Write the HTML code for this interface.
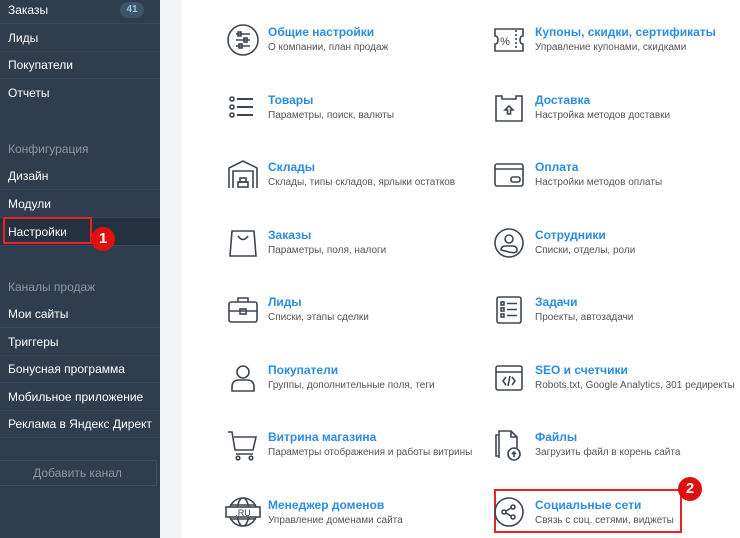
<!DOCTYPE html><html><head><meta charset="utf-8"><style>
*{margin:0;padding:0;box-sizing:border-box}
body{width:740px;height:538px;overflow:hidden;background:#fff;font-family:"Liberation Sans",sans-serif;position:relative}
#sb{position:absolute;left:0;top:0;width:160px;height:538px;background:#2f3e4e}
#strip{position:absolute;left:160px;top:0;width:22px;height:538px;background:#f3f4f5}
.it{position:absolute;left:0;width:160px;height:27px;color:#fff;font-size:12px;padding-left:8px;line-height:28px;border-bottom:1px solid #38475700;box-shadow:0 1px 0 #384757}
.hd{position:absolute;left:8px;color:#8d96a0;font-size:12px}
.badge{position:absolute;right:16px;top:3px;width:24px;height:16px;border-radius:8px;background:#3e5468;color:#9fc3e0;font-size:10px;font-weight:bold;text-align:center;line-height:16px}
.t{position:absolute;font-size:12px;font-weight:bold;color:#2b8de0}
.s{position:absolute;font-size:10px;color:#555}
svg.ic{position:absolute;width:34px;height:34px;fill:none;stroke:#3d4650;stroke-width:1.6}
.red{position:absolute;border:2px solid #e62525}
.num{position:absolute;width:24px;height:24px;border-radius:50%;background:#e01010;color:#fff;font-weight:bold;font-size:15px;text-align:center;line-height:24px}
</style></head><body>
<div id="sb">
<div class="it" style="top:-4px">Заказы<div class="badge" style="top:6px">41</div></div>
<div class="it" style="top:24px">Лиды</div>
<div class="it" style="top:51px">Покупатели</div>
<div class="it" style="top:79px;box-shadow:none">Отчеты</div>
<div class="hd" style="top:142px">Конфигурация</div>
<div class="it" style="top:162px">Дизайн</div>
<div class="it" style="top:190px">Модули</div>
<div class="it" style="top:218px;background:#243140">Настройки</div>
<div class="hd" style="top:280px">Каналы продаж</div>
<div class="it" style="top:300px">Мои сайты</div>
<div class="it" style="top:328px">Триггеры</div>
<div class="it" style="top:355px">Бонусная программа</div>
<div class="it" style="top:383px">Мобильное приложение</div>
<div class="it" style="top:410px">Реклама в Яндекс Директ</div>
<div style="position:absolute;left:-2px;top:460px;width:159px;height:26px;border:1px solid #3d4c5c;color:#8d96a0;font-size:12px;text-align:center;line-height:24px">Добавить канал</div>
</div>
<div id="strip"></div>
<div class="red" style="left:3px;top:217px;width:89px;height:27px"></div>
<div class="num" style="left:91px;top:227px">1</div>
<div class="red" style="left:494px;top:489px;width:188px;height:44px"></div>
<div class="num" style="left:678px;top:477px">2</div>

<!-- left column -->
<svg class="ic" style="left:226px;top:23px" viewBox="0 0 34 34"><circle cx="17" cy="17" r="15"/><path d="M10 11h14M10 17h14M10 23h14"/><rect x="12" y="9" width="3" height="4"/><rect x="18" y="15" width="3" height="4"/><rect x="13" y="21" width="3" height="4"/></svg>
<div class="t" style="left:268px;top:25px">Общие настройки</div><div class="s" style="left:268px;top:42px">О компании, план продаж</div>

<svg class="ic" style="left:226px;top:91px" viewBox="0 0 34 34"><circle cx="6" cy="8" r="2"/><circle cx="6" cy="16" r="2"/><circle cx="6" cy="24" r="2"/><path d="M11 8h16M11 16h16M11 24h16" stroke-width="1.9"/></svg>
<div class="t" style="left:268px;top:93px">Товары</div><div class="s" style="left:268px;top:110px">Параметры, поиск, валюты</div>

<svg class="ic" style="left:226px;top:158px" viewBox="0 0 34 34"><path d="M3 30V10L17 3l14 7v20M7 30V13h20v17"/><rect x="12" y="24" width="10" height="5"/><rect x="14" y="20" width="6" height="4"/></svg>
<div class="t" style="left:268px;top:160px">Склады</div><div class="s" style="left:268px;top:177px">Склады, типы складов, ярлыки остатков</div>

<svg class="ic" style="left:226px;top:226px" viewBox="0 0 34 34"><path d="M6 5h22l2 25H4z"/><path d="M12 10q5 7 10 0"/></svg>
<div class="t" style="left:268px;top:228px">Заказы</div><div class="s" style="left:268px;top:245px">Параметры, поля, налоги</div>

<svg class="ic" style="left:226px;top:293px" viewBox="0 0 34 34"><rect x="3" y="9" width="28" height="20" rx="2"/><path d="M12 9V5h10v4M3 18h28"/><rect x="14" y="16" width="6" height="5"/></svg>
<div class="t" style="left:268px;top:295px">Лиды</div><div class="s" style="left:268px;top:312px">Списки, этапы сделки</div>

<svg class="ic" style="left:226px;top:361px" viewBox="0 0 34 34"><circle cx="17" cy="11" r="6"/><path d="M6 30v-4q0-7 7-7h8q7 0 7 7v4z"/></svg>
<div class="t" style="left:268px;top:363px">Покупатели</div><div class="s" style="left:268px;top:380px">Группы, дополнительные поля, теги</div>

<svg class="ic" style="left:226px;top:428px" viewBox="0 0 34 34"><path d="M2 4h4l3 18h18l3-13H8M10 26h17"/><circle cx="12" cy="30" r="1.8"/><circle cx="25" cy="30" r="1.8"/></svg>
<div class="t" style="left:268px;top:430px">Витрина магазина</div><div class="s" style="left:268px;top:447px">Параметры отображения и работы витрины</div>

<svg class="ic" style="left:223px;top:495px;width:40px" viewBox="0 0 40 34"><circle cx="20" cy="17" r="14"/><ellipse cx="20" cy="17" rx="6" ry="14"/><path d="M7 10h26M7 24h26"/><rect x="3" y="12" width="34" height="10" fill="#fff"/><text x="20" y="21" font-size="9" text-anchor="middle" fill="#3d4650" stroke="none" font-family="Liberation Sans">.RU</text></svg>
<div class="t" style="left:268px;top:498px">Менеджер доменов</div><div class="s" style="left:268px;top:515px">Управление доменами сайта</div>

<!-- right column -->
<svg class="ic" style="left:492px;top:23px" viewBox="0 0 34 34"><path d="M3 6h28v7q-3 0-3 4t3 4v7H3v-7q3 0 3-4t-3-4z"/><path d="M24 7v20" stroke-dasharray="2 2"/><text x="13" y="22" font-size="11" text-anchor="middle" fill="#3d4650" stroke="none" font-family="Liberation Sans">%</text></svg>
<div class="t" style="left:535px;top:25px">Купоны, скидки, сертификаты</div><div class="s" style="left:535px;top:42px">Управление купонами, скидками</div>

<svg class="ic" style="left:492px;top:91px" viewBox="0 0 34 34"><path d="M4 5h6v3h14V5h6v25H4z"/><path d="M17 15l-4 4h2.5v4h3v-4H21z"/></svg>
<div class="t" style="left:535px;top:93px">Доставка</div><div class="s" style="left:535px;top:110px">Настройка методов доставки</div>

<svg class="ic" style="left:492px;top:158px" viewBox="0 0 34 34"><rect x="3" y="6" width="28" height="22" rx="2"/><path d="M3 11h28"/><rect x="19" y="19" width="9" height="5" rx="2"/></svg>
<div class="t" style="left:535px;top:160px">Оплата</div><div class="s" style="left:535px;top:177px">Настройки методов оплаты</div>

<svg class="ic" style="left:492px;top:226px" viewBox="0 0 34 34"><circle cx="17" cy="17" r="14"/><circle cx="17" cy="13" r="4"/><path d="M9 24q0-4 5-4h6q5 0 5 4t-8 2-8-2z"/></svg>
<div class="t" style="left:535px;top:228px">Сотрудники</div><div class="s" style="left:535px;top:245px">Списки, отделы, роли</div>

<svg class="ic" style="left:492px;top:293px" viewBox="0 0 34 34"><rect x="5" y="4" width="24" height="26" rx="2"/><rect x="9" y="9" width="3" height="3"/><rect x="9" y="15" width="3" height="3"/><rect x="9" y="21" width="3" height="3"/><path d="M15 10.5h10M15 16.5h10M15 22.5h10"/></svg>
<div class="t" style="left:535px;top:295px">Задачи</div><div class="s" style="left:535px;top:312px">Проекты, автозадачи</div>

<svg class="ic" style="left:492px;top:361px" viewBox="0 0 34 34"><rect x="4" y="5" width="26" height="24" rx="2"/><path d="M4 11h26M14 16l-3 4 3 4M20 16l3 4-3 4M18 15l-2 10"/></svg>
<div class="t" style="left:535px;top:363px">SEO и счетчики</div><div class="s" style="left:535px;top:380px">Robots.txt, Google Analytics, 301 редиректы</div>

<svg class="ic" style="left:492px;top:428px" viewBox="0 0 34 34"><path d="M7 28H4V7h3M7 30V3h12l6 6v12M19 3v6h6"/><circle cx="22" cy="26" r="6" fill="#fff"/><path d="M22 29v-5M20 26l2-2 2 2"/></svg>
<div class="t" style="left:535px;top:430px">Файлы</div><div class="s" style="left:535px;top:447px">Загрузить файл в корень сайта</div>

<svg class="ic" style="left:492px;top:495px" viewBox="0 0 34 34"><circle cx="17" cy="17" r="14"/><circle cx="12" cy="17" r="2"/><circle cx="21" cy="12" r="2"/><circle cx="21" cy="22" r="2"/><path d="M14 16l5-3M14 18l5 3"/></svg>
<div class="t" style="left:535px;top:498px">Социальные сети</div><div class="s" style="left:535px;top:515px">Связь с соц. сетями, виджеты</div>
</body></html>
